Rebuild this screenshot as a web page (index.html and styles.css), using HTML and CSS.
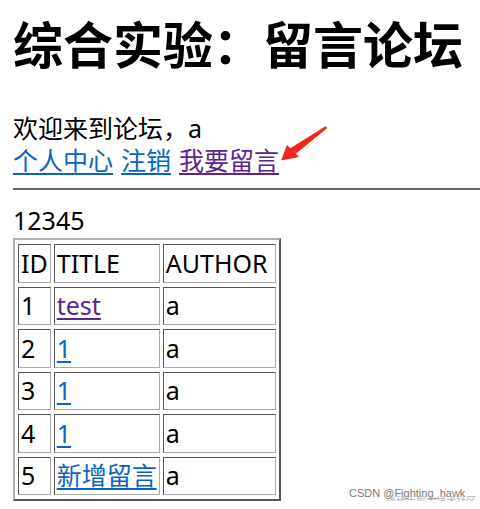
FILE: index.html
```html
<!DOCTYPE html>
<html lang="zh-CN">
<head>
<meta charset="utf-8">
<title>留言论坛</title>
<link rel="stylesheet" href="styles.css">
</head>
<body>
<h1 class="title">综合实验<span class="colon">：</span>留言论坛</h1>
<div class="welcome">欢迎来到论坛，a</div>
<div class="links"><a class="link" href="#">个人中心</a> <a class="link" href="#">注销</a> <a class="link visited" href="#">我要留言</a></div>
<hr class="rule">
<div class="count">12345</div>
<table class="posts">
  <tr><td class="c-id">ID</td><td class="c-title">TITLE</td><td class="c-author">AUTHOR</td></tr>
  <tr><td>1</td><td><a class="link visited" href="#">test</a></td><td>a</td></tr>
  <tr><td>2</td><td><a class="link" href="#">1</a></td><td>a</td></tr>
  <tr><td>3</td><td><a class="link" href="#">1</a></td><td>a</td></tr>
  <tr><td>4</td><td><a class="link" href="#">1</a></td><td>a</td></tr>
  <tr><td>5</td><td><a class="link" href="#">新增留言</a></td><td>a</td></tr>
</table>
<svg class="arrow" width="60" height="45" viewBox="0 0 60 45">
  <path d="M53.5 6.3 L55.3 8 L23.5 34 L18 28.5 Z" fill="#f2251b"/>
  <path d="M9 40.5 L15 25 L27 37 Z" fill="#f2251b"/>
</svg>
<div class="watermark">
  <span class="wm-main">CSDN @Fighting_hawk</span>
  <span class="wm-sub">@稀土掘金技术社区</span>
</div>
</body>
</html>
```

FILE: styles.css
```css
html {
  background: #fff;
  overflow: hidden;
}
body {
  margin: 12px 0 0 13px;
  font-family: "Noto Sans", "Noto Sans CJK SC", sans-serif;
  font-size: 25px;
  line-height: 32px;
  color: #000;
  position: relative;
}
.title {
  margin: 0 0 34px;
  font-size: 50px;
  line-height: 66px;
  font-weight: bold;
}
.colon {
  font-family: "Noto Sans CJK TC", sans-serif;
  line-height: 0;
}
.welcome,
.links,
.count {
  line-height: 32px;
}
.links {
  word-spacing: 1.5px;
}
.link {
  color: #0a64c2;
  text-decoration: underline;
  text-decoration-thickness: 2px;
  text-underline-offset: 3px;
}
.link.visited {
  color: #5a2590;
}
.rule {
  border: none;
  border-top: 2px solid #666;
  height: 0;
  margin: 12px 0 14px;
}
.posts {
  border-collapse: separate;
  border-spacing: 3px 4px;
  border: 2px solid;
  border-color: #b0b0b0 #555 #555 #b0b0b0;
  margin-top: 2px;
}
.posts td {
  border: 1px solid;
  border-color: #555 #aaa #aaa #555;
  padding: 1.5px 2px;
  line-height: 33.5px;
  white-space: nowrap;
}
.posts .c-id {
  width: 26px;
}
.posts .c-title {
  width: 100px;
}
.posts .c-author {
  width: 107px;
}
.arrow {
  position: absolute;
  left: 259px;
  top: 108px;
}
.watermark {
  position: absolute;
  left: 336px;
  top: 475px;
  width: 140px;
  height: 24px;
  font-family: "Liberation Sans", "Noto Sans CJK SC", sans-serif;
  font-size: 11px;
  line-height: 12px;
}
.wm-main {
  position: absolute;
  left: 0;
  top: 0;
  color: #777;
  white-space: nowrap;
}
.wm-sub {
  position: absolute;
  left: 37px;
  top: 9px;
  color: #b4b4b4;
  white-space: nowrap;
  font-size: 10px;
}
```
